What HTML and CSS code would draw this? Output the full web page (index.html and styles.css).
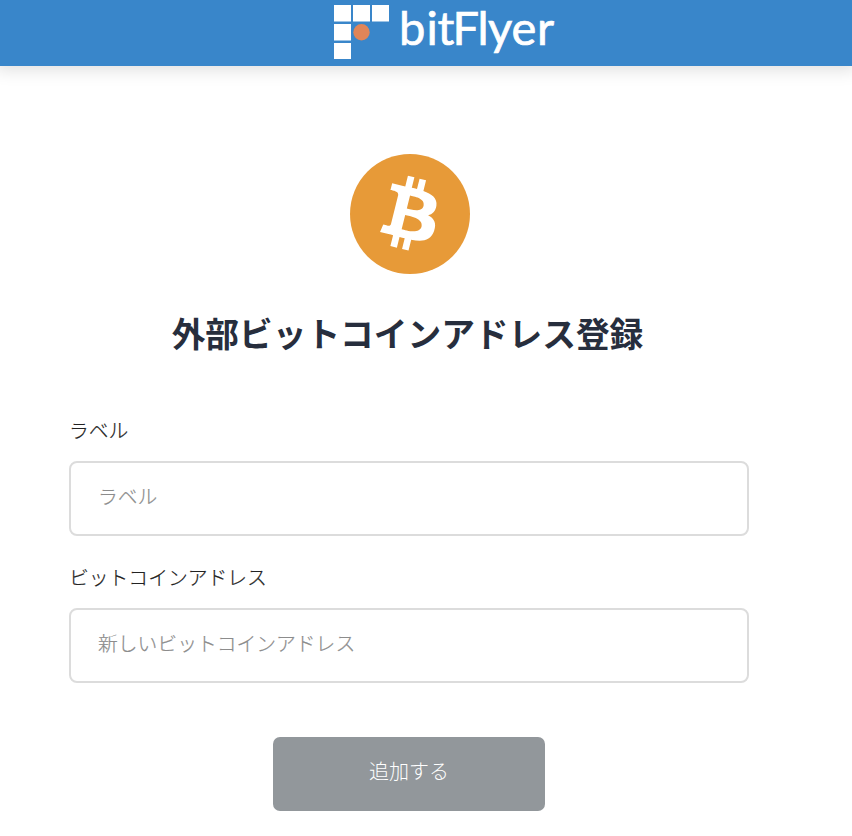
FILE: index.html
```
<!DOCTYPE html>
<html lang="ja">
<head>
  <meta charset="UTF-8">
  <meta name="viewport" content="width=device-width, initial-scale=1.0">
  <title>外部ビットコインアドレス登録</title>
  <link rel="stylesheet" href="styles.css">
</head>
<body>
  <header class="header">
    <svg class="logo" width="224" height="60" viewBox="0 0 224 60" role="img" aria-label="bitFlyer">
      <g fill="#fff">
        <rect x="0" y="5" width="17" height="16.5"/>
        <rect x="19" y="5" width="17" height="16.5"/>
        <rect x="38" y="5" width="17" height="16.5"/>
        <rect x="0" y="24" width="17" height="16.5"/>
        <rect x="0" y="43" width="17" height="16"/>
      </g>
      <circle cx="27.5" cy="32.3" r="8.2" fill="#e08558"/>
      <text class="logo-text" y="44.8" x="64.9 92.5 103.5 118.5 143.5 154 177.5 203">bitFlyer</text>
    </svg>
  </header>
  <main class="content">
    <svg class="coin" width="120" height="120" viewBox="0 0 32 32" aria-hidden="true">
      <circle cx="16" cy="16" r="16" fill="#e79a38"/>
      <path fill="#fff" transform="translate(-.15 -.2)" d="M23.189 14.02c.314-2.096-1.283-3.223-3.465-3.975l.708-2.84-1.728-.43-.69 2.765c-.454-.114-.92-.22-1.385-.326l.695-2.783L15.596 6l-.708 2.839c-.376-.086-.746-.17-1.104-.26l.002-.009-2.384-.595-.46 1.846s1.283.294 1.256.312c.7.175.826.638.805 1.006l-.806 3.235c.048.012.11.03.18.057l-.183-.045-1.13 4.532c-.086.212-.303.531-.793.41.018.025-1.256-.313-1.256-.313l-.858 1.978 2.25.561c.418.105.828.215 1.231.318l-.715 2.872 1.727.43.708-2.84c.472.127.93.245 1.378.357l-.706 2.828 1.728.43.715-2.866c2.948.558 5.164.333 6.097-2.333.752-2.146-.037-3.385-1.588-4.192 1.13-.26 1.98-1.003 2.207-2.538zm-3.95 5.538c-.533 2.147-4.148.986-5.32.695l.95-3.805c1.172.293 4.929.872 4.37 3.11zm.535-5.569c-.487 1.953-3.495.96-4.47.717l.86-3.45c.975.243 4.118.696 3.61 2.733z"/>
    </svg>
    <h1 class="title">外部ビットコインアドレス登録</h1>
    <form class="form">
      <label class="label" for="label">ラベル</label>
      <input class="input" id="label" type="text" placeholder="ラベル">
      <label class="label" for="address">ビットコインアドレス</label>
      <input class="input" id="address" type="text" placeholder="新しいビットコインアドレス">
      <button class="button" type="button">追加する</button>
    </form>
  </main>
</body>
</html>
```
FILE: styles.css
```
:root {
  --font: "Noto Sans CJK JP", sans-serif;
  --header-color: #3986ca;
  --title-color: #272e3d;
  --border-color: #dcdcdc;
}
* {
  box-sizing: border-box;
}
body {
  margin: 0;
  font-family: var(--font);
  color: #222;
  background-color: #fff;
}

.header {
  display: flex;
  height: 66px;
  padding-left: 334px;
  background-color: var(--header-color);
  box-shadow: 0 0 16px 4px rgba(0, 0, 0, 0.13);
}
.logo {
  display: block;
  overflow: visible;
}
.logo-text {
  font-family: Lato, sans-serif;
  font-size: 47px;
  fill: #fff;
  stroke: #fff;
  stroke-width: 0.7px;
}

.content {
  display: flex;
  flex-direction: column;
  align-items: center;
  width: 680px;
  margin-left: 69px;
  padding-top: 88px;
}
.coin {
  display: block;
  margin-left: 2px;
}
.title {
  margin: 34px 3px 0 0;
  font-size: 33.7px;
  line-height: 50px;
  font-weight: 700;
  white-space: nowrap;
  color: var(--title-color);
}

.form {
  display: flex;
  flex-direction: column;
  width: 100%;
  margin-top: 57px;
}
.label {
  margin-bottom: 16px;
  font-size: 19.8px;
  font-weight: 300;
  line-height: 30px;
  -webkit-text-stroke: 0.2px;
}
.input {
  height: 75px;
  margin-bottom: 26px;
  padding: 0 27px 7px;
  border: 2px solid var(--border-color);
  border-radius: 8px;
  font-family: var(--font);
  font-size: 19.8px;
  font-weight: 300;
}
.input::placeholder {
  color: #8c8c8c;
  -webkit-text-stroke: 0.2px;
}
.button {
  align-self: center;
  width: 272px;
  height: 74px;
  margin-top: 28px;
  padding: 0 0 7px;
  border: 0;
  border-radius: 7px;
  font-family: var(--font);
  font-size: 20px;
  font-weight: 300;
  color: #fff;
  background-color: #92979b;
}
```
